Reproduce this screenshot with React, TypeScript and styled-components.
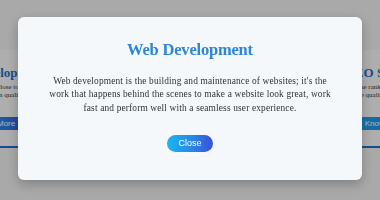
import styled, { createGlobalStyle } from 'styled-components';

const GlobalStyle = createGlobalStyle`
  html, body {
    margin: 0;
    padding: 0;
    background: #f2f2f2;
    overflow: hidden;
  }
  body {
    font-family: "Liberation Serif", serif;
  }
`;

const Page = styled.main`
  width: 380px;
  height: 200px;
  padding-top: 50px;
  box-sizing: border-box;
  overflow: hidden;
`;

const CardRow = styled.div`
  display: flex;
  justify-content: center;
  gap: 85px;
`;

const Card = styled.div`
  flex: 0 0 130px;
  height: 98px;
  box-sizing: border-box;
  padding: 15px 10px 0;
  background: #f9f9f9;
  border-bottom: 2px solid #1f6fd0;
  display: flex;
  flex-direction: column;
  align-items: center;
  text-align: center;
  margin: 0 -10px;
`;

const CardTitle = styled.h3`
  margin: 0 0 2px;
  font-size: 13px;
  line-height: 16px;
  font-weight: 700;
  color: #1f6fd0;
  white-space: nowrap;
`;

const CardText = styled.p`
  margin: 0 0 18px;
  font-size: 7px;
  line-height: 8px;
  color: #333;
  white-space: nowrap;
`;

const GradientButton = styled.button<{ $small?: boolean }>`
  border: none;
  color: #fff;
  font-family: "Liberation Sans", Arial, sans-serif;
  background: linear-gradient(90deg, #16b8f2 0%, #2a86e6 55%, #3b4fd8 100%);
  cursor: pointer;
  padding: 0;
  font-size: ${(p) => (p.$small ? '8px' : '9px')};
  border-radius: ${(p) => (p.$small ? '0' : '999px')};
`;

const CardButton = styled(GradientButton)`
  width: 76px;
  height: 13px;
  line-height: 13px;
`;

const Overlay = styled.div`
  position: fixed;
  inset: 0;
  background: rgba(0, 0, 0, 0.3);
  display: flex;
  align-items: center;
  justify-content: center;
`;

const Modal = styled.div`
  width: 344px;
  box-sizing: border-box;
  margin-top: -3px;
  padding: 23px 24px 28px;
  background: #f4f8fb;
  border-radius: 6px;
  box-shadow: 0 4px 12px rgba(0, 0, 0, 0.25);
  display: flex;
  flex-direction: column;
  align-items: center;
  text-align: center;
`;

const ModalTitle = styled.h2`
  margin: 0 0 15px;
  font-size: 16.5px;
  line-height: 20px;
  font-weight: 700;
  letter-spacing: -0.2px;
  color: #2d86d6;
`;

const ModalText = styled.p`
  max-width: 284px;
  margin: 0 0 20px;
  font-size: 9.4px;
  line-height: 13.5px;
  letter-spacing: 0.15px;
  color: #333;
`;

const CloseButton = styled(GradientButton)`
  height: 17px;
  width: 46px;
  line-height: 17px;
`;

const cards = [
  {
    title: 'Web Development',
    text: ['We build websites close to the latest', 'trends with a focus on quality of work.'],
  },
  {
    title: 'App Development',
    text: ['Apps that connect with your users', 'on every device, fast and reliable.'],
  },
  {
    title: 'SEO Services',
    text: ['Improve the ranking of your business', 'and the quality of web traffic.'],
  },
];

export default function App() {
  return (
    <>
      <GlobalStyle />
      <Page>
        <CardRow>
          {cards.map((card) => (
            <Card key={card.title}>
              <CardTitle>{card.title}</CardTitle>
              <CardText>
                {card.text[0]}
                <br />
                {card.text[1]}
              </CardText>
              <CardButton $small>Know More</CardButton>
            </Card>
          ))}
        </CardRow>
      </Page>
      <Overlay>
        <Modal>
          <ModalTitle>Web Development</ModalTitle>
          <ModalText>
            Web development is the building and maintenance of websites; it's the
            work that happens behind the scenes to make a website look great, work
            fast and perform well with a seamless user experience.
          </ModalText>
          <CloseButton>Close</CloseButton>
        </Modal>
      </Overlay>
    </>
  );
}
